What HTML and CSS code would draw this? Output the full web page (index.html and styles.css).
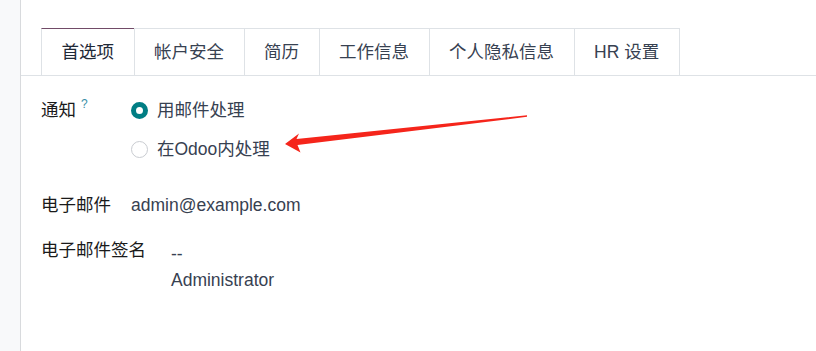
FILE: index.html
```html
<!DOCTYPE html>
<html lang="zh">
<head>
<meta charset="utf-8">
<link rel="stylesheet" href="styles.css">
</head>
<body>
<div class="page">
  <aside class="side"></aside>
  <main class="main">
    <ul class="tabs">
      <li class="tab active">首选项</li>
      <li class="tab">帐户安全</li>
      <li class="tab">简历</li>
      <li class="tab">工作信息</li>
      <li class="tab">个人隐私信息</li>
      <li class="tab">HR 设置</li>
    </ul>
    <section class="form">
      <div class="row row-notify">
        <div class="label">通知<sup class="help">?</sup></div>
        <div class="radios">
          <div class="radio-item"><span class="radio checked"></span>用邮件处理</div>
          <div class="radio-item"><span class="radio"></span>在Odoo内处理</div>
        </div>
      </div>
      <div class="row row-email">
        <div class="label">电子邮件</div>
        <div class="value">admin@example.com</div>
      </div>
      <div class="row row-sign">
        <div class="label label-wide">电子邮件签名</div>
        <div class="value sign">
          <div>--</div>
          <div>Administrator</div>
        </div>
      </div>
    </section>
  </main>
</div>
<svg class="arrow" width="816" height="351" viewBox="0 0 816 351">
  <polygon points="285,144 299,133.5 296.5,139 527,115.3 527,116.8 297.5,145 300.5,152.5" fill="#f5251b"/>
</svg>
</body>
</html>
```

FILE: styles.css
```css
html, body {
  margin: 0;
  padding: 0;
  background: #ffffff;
}
body {
  font-family: "Liberation Sans", "Noto Sans CJK SC", sans-serif;
  font-size: 17.5px;
  color: #374151;
  width: 816px;
  height: 351px;
  overflow: hidden;
  position: relative;
}
.page {
  display: flex;
  height: 351px;
}
.side {
  width: 20px;
  flex: none;
  background: #f8f9fa;
  border-right: 1px solid #d8dadd;
}
.main {
  flex: 1;
  padding-top: 28px;
}
.tabs {
  list-style: none;
  margin: 0;
  padding: 0 0 0 20px;
  display: flex;
  border-bottom: 1px solid #dee2e6;
}
.tab {
  height: 46px;
  line-height: 46px;
  padding: 0 19.5px;
  border: 1px solid #dee2e6;
  border-bottom: none;
  margin-right: -1px;
  color: #374151;
  white-space: nowrap;
}
.tab.active {
  border-top-color: #714b67;
  color: #1f2937;
}
.form {
  padding: 21px 0 0 20px;
}
.row {
  display: flex;
  align-items: flex-start;
  line-height: 26px;
}
.label {
  width: 90px;
  flex: none;
  color: #1a1a1a;
}
.label-wide {
  width: 130px;
}
.help {
  font-size: 12px;
  color: #3b8fa8;
  vertical-align: top;
  line-height: 12px;
  margin-left: 5px;
  position: relative;
  top: 1px;
}
.radios {
  display: flex;
  flex-direction: column;
  gap: 13px;
}
.radio-item {
  display: flex;
  align-items: center;
  height: 26px;
}
.radio {
  width: 17px;
  height: 17px;
  box-sizing: border-box;
  border-radius: 50%;
  border: 1px solid #c9ccd1;
  margin-right: 9px;
  background: #fff;
}
.radio.checked {
  border: 5px solid #017e84;
}
.row-email {
  margin-top: 30px;
}
.row-sign {
  margin-top: 19px;
}
.sign {
  padding-top: 4px;
}
.arrow {
  position: absolute;
  left: 0;
  top: 0;
  pointer-events: none;
}
```
